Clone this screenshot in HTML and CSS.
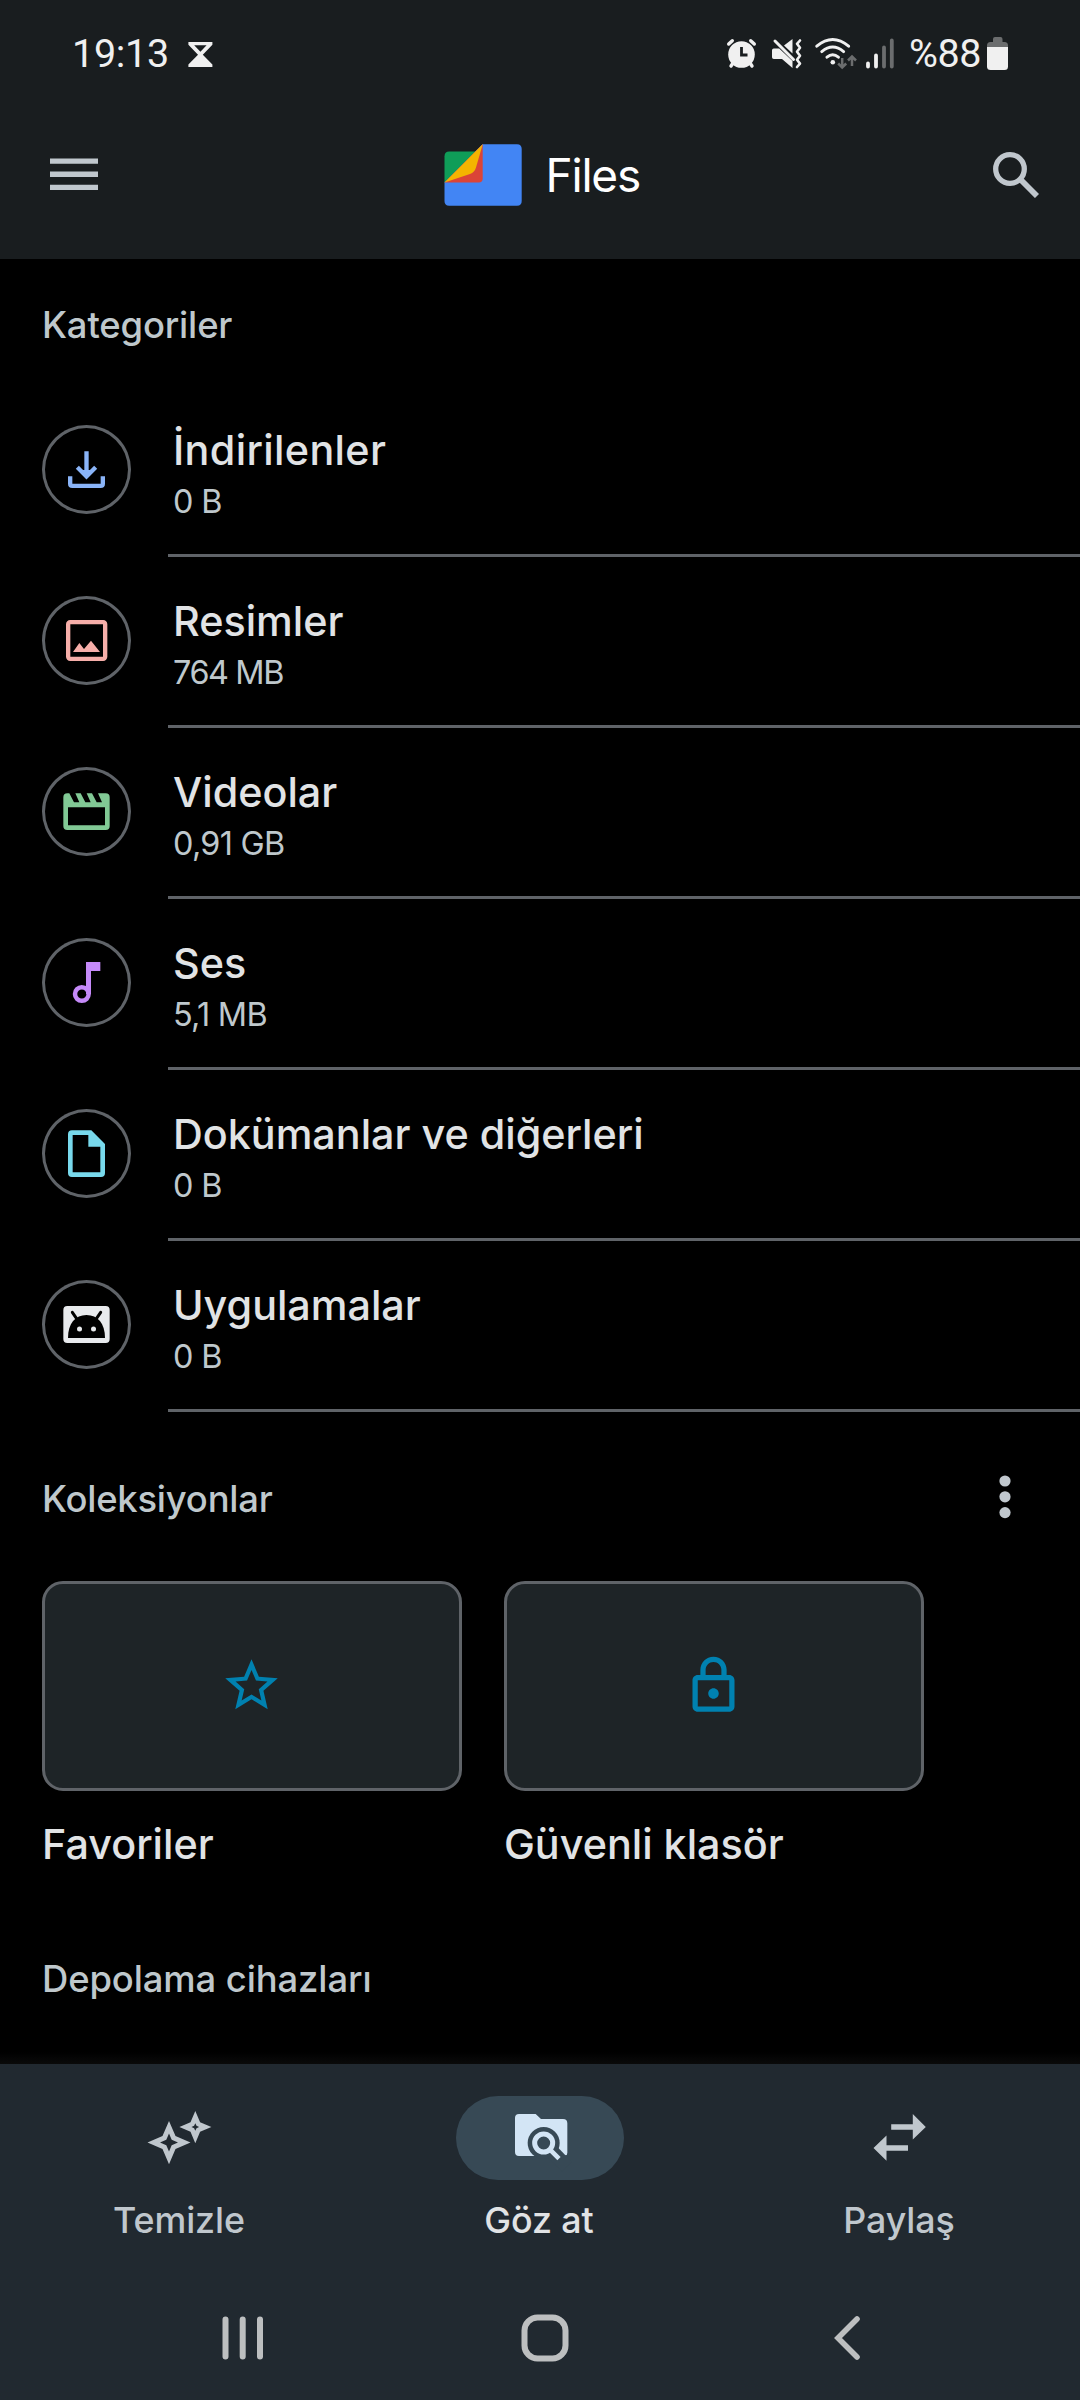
FILE: index.html
```html
<!DOCTYPE html>
<html lang="tr">
<head>
<meta charset="utf-8">
<title>Files</title>
<link rel="stylesheet" href="styles.css">
</head>
<body>
<div class="screen">
  <header class="top">
    <div class="status">
      <span class="clock">19:13</span>
      <svg class="hourglass" width="26" height="27" viewBox="187 41 26 27"><path fill="#f0f0f0" d="M188.4 42h24v2.800l-9.600 10 9.600 9.700V67h-24v-2.500l9.600-9.700-9.600-10zM194.200 45.200l6.200 6.600 6.200-6.600z"/></svg>
      <div class="indicators">
        <svg width="34" height="36" viewBox="725 36 34 36"><circle cx="741.500" cy="54.500" r="13.300" fill="#f0f0f0"/><g stroke="#f0f0f0" stroke-width="3.400" stroke-linecap="round"><path d="M728.700 44l3.600-3.300M754.300 44l-3.600-3.300M733 63l-2 3M750 63l2 3"/></g><path d="M741.500 47v8h6" fill="none" stroke="#191d1f" stroke-width="2.800"/></svg>
        <svg class="mute" width="34" height="36" viewBox="770 36 34 36"><path fill="#f0f0f0" d="M792.500 39v14.500L784 45.500zM773.800 48.500h5.400l13.300 12.500v7l-10.500-9h-8.200q-1.800 0-1.800-1.800v-6.900q0-1.800 1.800-1.800z"/><path d="M775 41l18.500 18.500" stroke="#f0f0f0" stroke-width="3" stroke-linecap="round"/><path d="M800 40.500l-3 3.300 3 4-3 4 3 4-3 4 3 3.800-3 3.400" fill="none" stroke="#f0f0f0" stroke-width="2.600" stroke-linecap="round" stroke-linejoin="round"/></svg>
        <svg class="wifi" width="44" height="36" viewBox="814 36 44 36"><g fill="none" stroke="#f0f0f0" stroke-width="2.900" stroke-linecap="round"><path d="M816.800 46.200Q832.700 32.800 848.600 46.200M821.800 51.600Q832.700 42.600 843.600 51.600M827 57.200Q832.700 52.400 838.400 57.200"/></g><circle cx="832.800" cy="62.200" r="2.300" fill="#f0f0f0"/><g fill="none" stroke="#6b6d6e" stroke-width="2.500"><path d="M842.200 58v9.500M838.200 63.500l4 4 4-4M852 66V56.500M848 60.500l4-4 4 4"/></g></svg>
        <svg class="signal" width="30" height="36" viewBox="865 36 30 36"><g stroke-width="3.800" stroke-linecap="round"><path stroke="#f0f0f0" d="M868 63.500V66.500M876 55.500V66.500"/><path stroke="#6b6d6e" d="M884 47.500V66.500M891.800 40.500V66.500"/></g></svg>
        <span class="percent">%88</span>
        <svg class="battery" width="21" height="34" viewBox="987 37 21 34"><path fill="#6b6d6e" d="M993 42v-3q0-2 2-2h5.500q2 0 2 2v3h2q3.500 0 3.500 3.500V48H987v-2.500q0-3.500 3.500-3.500z"/><path fill="#f0f0f0" d="M987 47h21v19.500q0 3.500-3.500 3.500h-14q-3.500 0-3.500-3.500z"/></svg>
      </div>
    </div>
    <div class="appbar">
      <svg width="48" height="33" viewBox="0 0 48 33"><path fill="#c0c7cd" d="M0 .5h48v5.300H0zM0 13.600h48v5.300H0zM0 26.700h48V32H0z"/></svg>
      <div class="brand">
        <svg width="78" height="62" viewBox="444 144 78 62"><path fill="#4285f4" d="M482.500 144.300H517q4.700 0 4.700 4.700V201q0 4.700-4.700 4.700H449.200q-4.700 0-4.700-4.700V182z"/><path fill="#0f9d58" d="M475.500 151.500H449.200q-4.700 0-4.700 4.700V182.500z"/><path fill="#db4437" d="M482.700 144.300V178.500q0 4-4 4H444.500z"/><path fill="#f4b400" d="M482.700 144.300L476 167.500Q474.600 172.300 470 174L444.500 182.500z"/></svg>
        <span class="brand-name">Files</span>
      </div>
      <svg width="46" height="46" viewBox="993 150 46 46"><g fill="none" stroke="#c0c7cd"><circle cx="1010" cy="167" r="14.300" stroke-width="5.300"/><path d="M1021 178l16 16" stroke-width="5.800"/></g></svg>
    </div>
  </header>

  <main class="content">
    <h2 class="heading first">Kategoriler</h2>
    <ul class="categories">
      <li class="row">
        <div class="badge"><svg viewBox="0 0 267 267"><g fill="none" stroke="#8ab4f8" stroke-width="13"><path d="M133.500 79V150M84.500 154V176q0 6.500 6.500 6.500H176q6.500 0 6.500-6.500V154"/><path d="M106 127l27.500 27.500L161 127"/></g><path fill="#8ab4f8" d="M119 135h29l-14.500 18z"/></svg></div>
        <div class="info"><div class="title first-title">İndirilenler</div><div class="size">0 B</div></div>
      </li>
      <li class="row">
        <div class="badge"><svg viewBox="0 0 267 267"><rect x="78.500" y="78.500" width="111" height="110" rx="6" fill="none" stroke="#f6aea9" stroke-width="13"/><path fill="#f6aea9" d="M93 168l19-27 14 18 21-25 27 34z"/></svg></div>
        <div class="info"><div class="title">Resimler</div><div class="size mb">764 MB</div></div>
      </li>
      <li class="row">
        <div class="badge"><svg viewBox="0 0 267 267"><path fill="#81c995" fill-rule="evenodd" d="M76 79h6l14 27h16L100 79h16l14 27h16L134 79h16l14 27h16L168 79h23q12 0 12 12v86q0 12-12 12H76q-12 0-12-12V91q0-12 12-12zM78 121v54h111v-54z"/></svg></div>
        <div class="info"><div class="title">Videolar</div><div class="size">0,91 GB</div></div>
      </li>
      <li class="row">
        <div class="badge"><svg viewBox="0 0 267 267"><circle cx="119.500" cy="168" r="20.500" fill="none" stroke="#c58af9" stroke-width="13.500"/><path fill="#c58af9" d="M132 72h43v27h-28v69h-15z"/></svg></div>
        <div class="info"><div class="title">Ses</div><div class="size">5,1 MB</div></div>
      </li>
      <li class="row">
        <div class="badge"><svg viewBox="0 0 267 267"><path fill="#78d9ec" fill-rule="evenodd" d="M90 64H148L189 105V192q0 12-12 12H90q-12 0-12-12V76q0-12 12-12zM92 78V190H175V113H139V78z"/></svg></div>
        <div class="info"><div class="title">Dokümanlar ve diğerleri</div><div class="size">0 B</div></div>
      </li>
      <li class="row">
        <div class="badge"><svg viewBox="0 0 267 267"><rect x="64" y="78" width="139" height="111" rx="12" fill="#e8eaed"/><path d="M78 174C78 130 100 105 133.500 105S189 130 189 174z"/><path d="M91 97l15 22M176 97l-15 22" stroke="#000" stroke-width="9" stroke-linecap="round"/><circle cx="112.500" cy="147" r="7.500" fill="#e8eaed"/><circle cx="154.500" cy="147" r="7.500" fill="#e8eaed"/></svg></div>
        <div class="info"><div class="title">Uygulamalar</div><div class="size">0 B</div></div>
      </li>
    </ul>

    <div class="collections-head">
      <h2 class="heading">Koleksiyonlar</h2>
      <svg width="12" height="44" viewBox="0 0 12 44"><g fill="#c0c7cd"><circle cx="6" cy="6" r="5.600"/><circle cx="6" cy="21.800" r="5.600"/><circle cx="6" cy="37.600" r="5.600"/></g></svg>
    </div>
    <div class="collections">
      <div class="collection">
        <div class="card"><svg width="63" height="63" viewBox="0 0 24 24"><path fill="#0081b0" d="M22 9.240l-7.190-.62L12 2 9.190 8.630 2 9.240l5.460 4.730L5.820 21 12 17.270 18.180 21l-1.630-7.030L22 9.240zM12 15.400l-3.760 2.270 1-4.280-3.320-2.880 4.380-.38L12 6.100l1.710 4.040 4.380.38-3.320 2.880 1 4.280L12 15.400z"/></svg></div>
        <div class="card-name">Favoriler</div>
      </div>
      <div class="collection">
        <div class="card"><svg width="63" height="63" viewBox="0 0 24 24"><path fill="#0081b0" d="M18 8h-1V6c0-2.760-2.240-5-5-5S7 3.240 7 6v2H6c-1.100 0-2 .9-2 2v10c0 1.100.9 2 2 2h12c1.100 0 2-.9 2-2V10c0-1.100-.9-2-2-2zM9 6c0-1.660 1.340-3 3-3s3 1.340 3 3v2H9V6zm9 14H6V10h12v10zm-6-3c1.100 0 2-.9 2-2s-.9-2-2-2-2 .9-2 2 .9 2 2 2z"/></svg></div>
        <div class="card-name">Güvenli klasör</div>
      </div>
    </div>
    <h2 class="heading storage">Depolama cihazları</h2>
  </main>

  <nav class="tabs">
    <div class="tab">
      <div class="pill"><svg width="168" height="84" viewBox="96 2096 168 84"><path fill="#c0c7cd" fill-rule="evenodd" d="M169 2121l6.500 15 15 6.500-15 6.500L169 2164.300l-6.500-15.300-15-6.500 15-6.500zM169 2133.500l-2.700 6.300-6.300 2.700 6.300 2.700 2.700 6.300 2.700-6.300 6.300-2.700-6.300-2.700zM195.300 2111l4.800 11.200 11.300 4.800-11.300 4.800-4.800 11.500-4.800-11.500-11.100-4.800 11.100-4.800zM195.300 2123.200l-1.200 2.600-2.600 1.200 2.600 1.200 1.200 2.600 1.200-2.600 2.600-1.200-2.600-1.200z"/></svg></div>
      <div class="tab-name">Temizle</div>
    </div>
    <div class="tab active">
      <div class="pill"><svg width="80" height="84" viewBox="0 18 240 252"><path fill="#d3e5f5" d="M57 72h50l16 15h66q13 0 13 13v88q0 8-6 8l-20 2H57q-12 0-12-12V84q0-12 12-12z"/><g stroke="#374955" fill="#374955"><circle cx="131" cy="159" r="48" stroke="none"/><path d="M150 178l50 52" stroke-width="42"/></g><g fill="none" stroke="#d3e5f5"><circle cx="131" cy="159" r="27" stroke-width="15"/><path d="M150 179l27 27" stroke-width="14"/></g></svg></div>
      <div class="tab-name">Göz at</div>
    </div>
    <div class="tab">
      <div class="pill"><svg width="168" height="84" viewBox="816 2096 168 84"><path fill="#c0c7cd" d="M891.200 2124.300h21.600V2114l13 13-13 12.500v-9.800h-21.600zM908 2145.300h-21.500v-9.800l-13 12.500 13 12.700v-10h21.500z"/></svg></div>
      <div class="tab-name">Paylaş</div>
    </div>
  </nav>
  <div class="system-nav">
    <svg width="42" height="48" viewBox="0 0 42 48"><path d="M3.500 5.500v37M20.700 5.500v37M38 5.500v37" stroke="#bdbfc0" stroke-width="6" stroke-linecap="round"/></svg>
    <svg class="home" width="48" height="48" viewBox="0 0 48 48"><rect x="3.500" y="3.500" width="41" height="41" rx="13" fill="none" stroke="#bdbfc0" stroke-width="6"/></svg>
    <svg width="28" height="48" viewBox="0 0 28 48"><path d="M24 5L5 24l19 19" fill="none" stroke="#bdbfc0" stroke-width="5.600" stroke-linecap="round"/></svg>
  </div>
</div>
</body>
</html>
```
FILE: styles.css
```css
* { box-sizing: border-box; }

body {
  margin: 0;
  background: #000;
  font-family: Inter, Roboto, sans-serif;
}

svg { display: block; flex: none; }

.screen {
  display: flex;
  flex-direction: column;
  width: 1080px;
  height: 2400px;
  overflow: hidden;
}

/* Status bar and app bar */
.top {
  height: 259px;
  background: #191d1f;
}

.status {
  display: flex;
  align-items: center;
  height: 92px;
  padding: 16px 72px 0 72px;
  color: #f0f0f0;
  font: 400 39.5px/44px Roboto, sans-serif;
}

.clock { width: 115px; letter-spacing: -0.3px; }

.indicators {
  display: flex;
  align-items: center;
  margin-left: auto;
}

.mute { margin-left: 11px; }
.wifi { margin-left: 10px; }
.signal { margin-left: 7px; }
.percent { width: 78px; margin-left: 14px; letter-spacing: -0.4px; }

.appbar {
  display: flex;
  align-items: center;
  justify-content: space-between;
  height: 167px;
  padding: 0 41px 2px 50px;
}

.brand { display: flex; align-items: center; gap: 24px; margin-right: 5px; }

.brand-name {
  width: 97px;
  color: #fff;
  font-size: 46px;
  line-height: 56px;
  letter-spacing: -1.2px;
  white-space: nowrap;
}

/* Content */
.content {
  height: 1805px;
  background: linear-gradient(#000 1793px, #0a0a0a 1805px);
}

.heading {
  margin: 0;
  color: #bfc8cc;
  font-size: 36.4px;
  font-weight: 500;
  line-height: 48px;
  letter-spacing: -0.15px;
}

.first { padding: 42px 42px 37px; }

.categories { margin: 0; padding: 0; list-style: none; }

.row { display: flex; height: 171px; padding-left: 42px; }

.badge {
  width: 89px;
  height: 89px;
  margin-top: 39px;
  border-radius: 50%;
  box-shadow: inset 0 0 0 3px #5f6368;
}

.info {
  flex: 1;
  margin-left: 37px;
  padding: 40px 0 0 5px;
  border-bottom: 3px solid #5f6368;
}

.title, .card-name {
  color: #e1e3e5;
  font-size: 41.3px;
  font-weight: 500;
  line-height: 48px;
}

.title { letter-spacing: 0; }
.first-title { letter-spacing: 0.35px; }

.size {
  margin-top: 8px;
  color: #bfc8cc;
  font-size: 32.4px;
  line-height: 40px;
  letter-spacing: -0.7px;
}

.mb { letter-spacing: -1.4px; }

.collections-head {
  display: flex;
  justify-content: space-between;
  height: 169px;
  padding: 63px 69px 0 42px;
}

.collections-head .heading { letter-spacing: -0.2px; }

.collections { display: flex; gap: 42px; padding-left: 42px; }
.collection { width: 420px; }

.card {
  display: flex;
  align-items: center;
  justify-content: center;
  height: 210px;
  padding: 0 2px 2px 0;
  border: 3px solid #5f6368;
  border-radius: 21px;
  background: #1e2427;
}

.card-name { margin-top: 29px; }

.storage { margin: 87px 0 0 42px; letter-spacing: -0.1px; }

/* Bottom navigation */
.tabs {
  display: flex;
  height: 210px;
  padding-top: 32px;
  background: #212930;
}

.tab { flex: 1; text-align: center; color: #c0c7cd; }

.pill {
  display: flex;
  align-items: center;
  justify-content: center;
  width: 168px;
  height: 84px;
  margin: 0 auto;
  border-radius: 42px;
}

.active { color: #e1e3e5; }
.active .pill { background: #374955; }

.tab-name {
  margin-top: 18px;
  padding-right: 2px;
  font-size: 35.8px;
  font-weight: 500;
  line-height: 44px;
  letter-spacing: -0.1px;
}

.system-nav {
  display: flex;
  align-items: center;
  justify-content: space-between;
  height: 126px;
  padding: 1px 219px 0 221.5px;
  background: #212930;
}

.home { margin-right: 6px; }
```
